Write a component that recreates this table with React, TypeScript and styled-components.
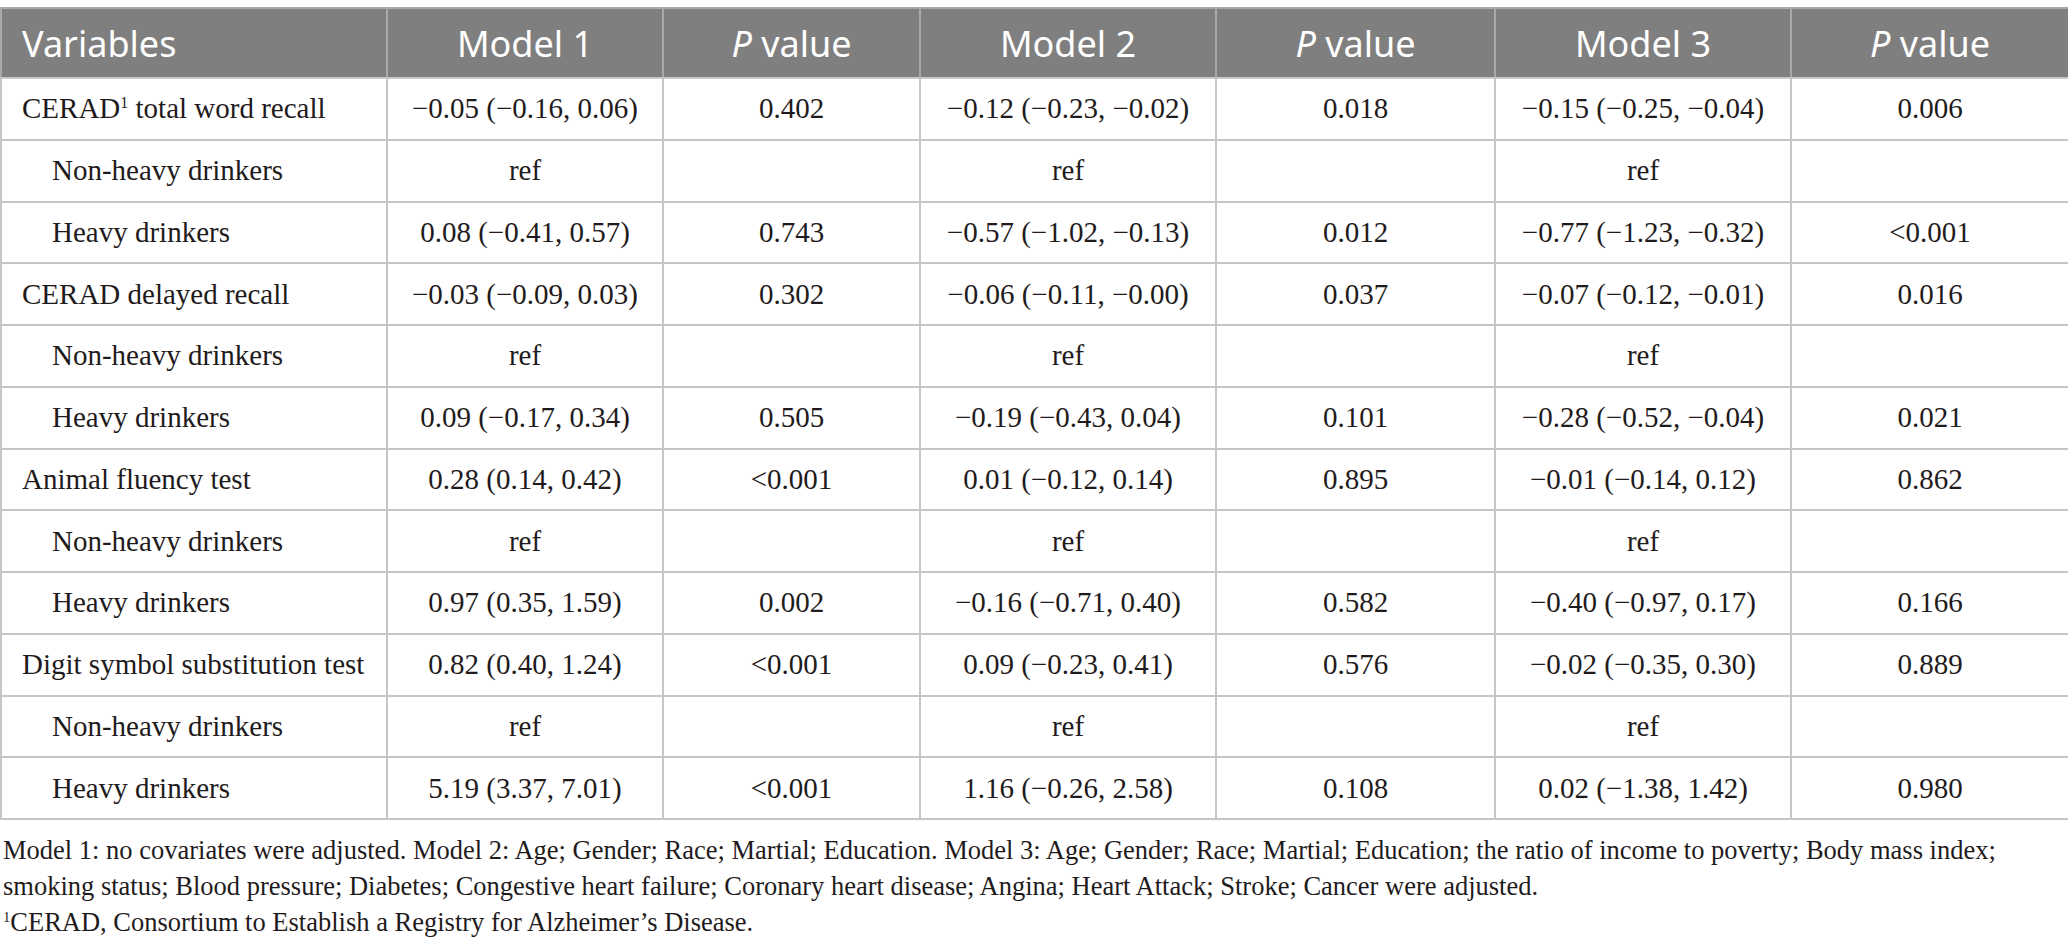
import styled, { createGlobalStyle } from "styled-components";

interface IRow {
  label: string;
  sup?: string;
  indent?: boolean;
  cells: string[];
}

const GlobalStyle = createGlobalStyle`
  html, body {
    margin: 0;
    padding: 0;
    background: #fff;
  }
`;

const Page = styled.div`
  padding-top: 7px;
  width: 2068px;
`;

const Table = styled.table`
  width: 2068px;
  border-collapse: collapse;
  table-layout: fixed;
  font-family: "Liberation Serif", "Times New Roman", serif;
  color: #231f20;
`;

const HeadCell = styled.th<{ $left?: boolean }>`
  height: 70px;
  padding: 0 20px;
  background: #7f7f7f;
  color: #fff;
  font-family: "Noto Sans", "Open Sans", sans-serif;
  font-weight: 400;
  font-size: 36px;
  text-align: ${(p) => (p.$left ? "left" : "center")};
  border: 2px solid #a8a8a8;
  border-bottom-color: #c9c9c9;
  box-sizing: border-box;
`;

const Cell = styled.td<{ $left?: boolean; $indent?: boolean }>`
  height: 61.75px;
  padding: 0 ${(p) => (p.$left ? "0" : "10px")} 0
    ${(p) => (p.$indent ? "50px" : p.$left ? "20px" : "10px")};
  font-family: "Liberation Serif", "Times New Roman", serif;
  font-size: 29px;
  color: #1f1b1c;
  text-align: ${(p) => (p.$left ? "left" : "center")};
  border: 2px solid #c6c6c6;
  white-space: nowrap;
  box-sizing: border-box;
`;

const Sup = styled.sup`
  font-size: 0.55em;
  vertical-align: 0.65em;
  line-height: 0;
`;

const Notes = styled.div`
  margin-top: 12px;
  padding: 0 50px 0 3px;
  font-family: "Liberation Serif", "Times New Roman", serif;
  font-size: 26.5px;
  line-height: 36px;
  color: #1f1b1c;
`;

const Note = styled.p`
  margin: 0;
`;

const widths = [386, 276, 257, 296, 279, 296, 278];

const rows: IRow[] = [
  { label: "CERAD", sup: "1", cells: ["−0.05 (−0.16, 0.06)", "0.402", "−0.12 (−0.23, −0.02)", "0.018", "−0.15 (−0.25, −0.04)", "0.006"] },
  { label: "Non-heavy drinkers", indent: true, cells: ["ref", "", "ref", "", "ref", ""] },
  { label: "Heavy drinkers", indent: true, cells: ["0.08 (−0.41, 0.57)", "0.743", "−0.57 (−1.02, −0.13)", "0.012", "−0.77 (−1.23, −0.32)", "<0.001"] },
  { label: "CERAD delayed recall", cells: ["−0.03 (−0.09, 0.03)", "0.302", "−0.06 (−0.11, −0.00)", "0.037", "−0.07 (−0.12, −0.01)", "0.016"] },
  { label: "Non-heavy drinkers", indent: true, cells: ["ref", "", "ref", "", "ref", ""] },
  { label: "Heavy drinkers", indent: true, cells: ["0.09 (−0.17, 0.34)", "0.505", "−0.19 (−0.43, 0.04)", "0.101", "−0.28 (−0.52, −0.04)", "0.021"] },
  { label: "Animal fluency test", cells: ["0.28 (0.14, 0.42)", "<0.001", "0.01 (−0.12, 0.14)", "0.895", "−0.01 (−0.14, 0.12)", "0.862"] },
  { label: "Non-heavy drinkers", indent: true, cells: ["ref", "", "ref", "", "ref", ""] },
  { label: "Heavy drinkers", indent: true, cells: ["0.97 (0.35, 1.59)", "0.002", "−0.16 (−0.71, 0.40)", "0.582", "−0.40 (−0.97, 0.17)", "0.166"] },
  { label: "Digit symbol substitution test", cells: ["0.82 (0.40, 1.24)", "<0.001", "0.09 (−0.23, 0.41)", "0.576", "−0.02 (−0.35, 0.30)", "0.889"] },
  { label: "Non-heavy drinkers", indent: true, cells: ["ref", "", "ref", "", "ref", ""] },
  { label: "Heavy drinkers", indent: true, cells: ["5.19 (3.37, 7.01)", "<0.001", "1.16 (−0.26, 2.58)", "0.108", "0.02 (−1.38, 1.42)", "0.980"] },
];

const PValue = () => (
  <>
    <i>P</i> value
  </>
);

const App = () => {
  return (
    <Page>
      <GlobalStyle />
      <Table>
        <colgroup>
          {widths.map((w, i) => (
            <col key={i} style={{ width: w }} />
          ))}
        </colgroup>
        <thead>
          <tr>
            <HeadCell $left>Variables</HeadCell>
            <HeadCell>Model 1</HeadCell>
            <HeadCell>
              <PValue />
            </HeadCell>
            <HeadCell>Model 2</HeadCell>
            <HeadCell>
              <PValue />
            </HeadCell>
            <HeadCell>Model 3</HeadCell>
            <HeadCell>
              <PValue />
            </HeadCell>
          </tr>
        </thead>
        <tbody>
          {rows.map((row, i) => (
            <tr key={i}>
              <Cell $left $indent={row.indent}>
                {row.label}
                {row.sup && (
                  <>
                    <Sup>{row.sup}</Sup> total word recall
                  </>
                )}
              </Cell>
              {row.cells.map((c, j) => (
                <Cell key={j}>{c}</Cell>
              ))}
            </tr>
          ))}
        </tbody>
      </Table>
      <Notes>
        <Note>
          Model 1: no covariates were adjusted. Model 2: Age; Gender; Race; Martial; Education. Model 3: Age;
          Gender; Race; Martial; Education; the ratio of income to poverty; Body mass index; smoking status; Blood
          pressure; Diabetes; Congestive heart failure; Coronary heart disease; Angina; Heart Attack; Stroke;
          Cancer were adjusted.
        </Note>
        <Note>
          <Sup>1</Sup>CERAD, Consortium to Establish a Registry for Alzheimer’s Disease.
        </Note>
      </Notes>
    </Page>
  );
};

export default App;
